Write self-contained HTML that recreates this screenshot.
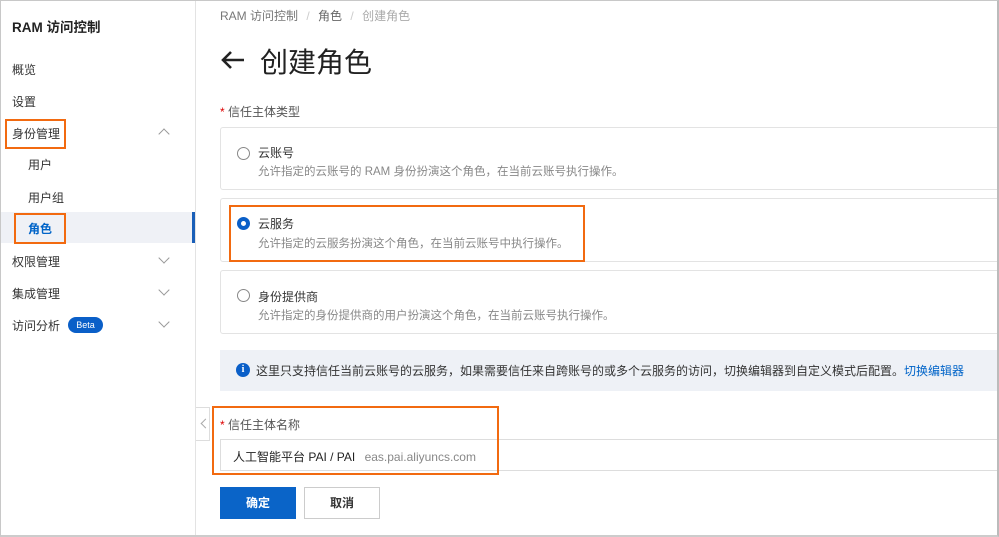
<!DOCTYPE html>
<html><head><meta charset="utf-8"><style>
*{box-sizing:border-box;margin:0;padding:0}
body{width:999px;height:537px;overflow:hidden;background:#fff;font-family:"Liberation Sans","Noto Sans CJK SC",sans-serif;color:#333;position:relative;font-size:12px}
.abs{position:absolute}
.frame{position:absolute;left:0;top:0;width:999px;height:537px;border:1px solid #c8c8c8;border-right:2px solid #bbb;border-bottom:2px solid #ccc;pointer-events:none}
.side{left:1px;top:1px;width:195px;height:535px;border-right:1px solid #e3e3e3;background:#fff}
.nav{position:absolute;left:12px;font-size:12px;color:#333}
.chev{position:absolute;left:160px;width:8px;height:8px;border-right:1.3px solid #999;border-bottom:1.3px solid #999}
.card{position:absolute;left:220px;width:790px;border:1px solid #e3e3e3;border-radius:3px}
.radio{position:absolute;left:16px;width:13px;height:13px;border:1px solid #888;border-radius:50%}
.ct{position:absolute;left:37px;font-size:12px;color:#333}
.cd{position:absolute;left:37px;font-size:11.5px;color:#888}
.ob{position:absolute;border:2px solid #f26a10}
</style></head><body>
<div class="abs side"></div>
<div class="abs" style="left:12px;top:16px;font-size:13.5px;font-weight:bold;color:#222">RAM 访问控制</div>
<div class="nav" style="top:61px">概览</div>
<div class="nav" style="top:93px">设置</div>
<div class="nav" style="top:125px">身份管理</div>
<div class="chev" style="top:130px;transform:rotate(-135deg)"></div>
<div class="nav" style="top:156px;left:28px">用户</div>
<div class="nav" style="top:189px;left:28px">用户组</div>
<div class="abs" style="left:1px;top:212px;width:194px;height:31px;background:#eff1f6"></div>
<div class="abs" style="left:192px;top:212px;width:3px;height:31px;background:#1a5fb8"></div>
<div class="nav" style="top:220px;left:28px;color:#0064c8;font-weight:bold">角色</div>
<div class="nav" style="top:253px">权限管理</div>
<div class="chev" style="top:254px;transform:rotate(45deg)"></div>
<div class="nav" style="top:285px">集成管理</div>
<div class="chev" style="top:286px;transform:rotate(45deg)"></div>
<div class="nav" style="top:317px">访问分析</div>
<div class="abs" style="left:68px;top:317px;width:35px;height:16px;border-radius:8px;background:#0a5fc8;color:#fff;font-size:9px;text-align:center;line-height:16px">Beta</div>
<div class="chev" style="top:318px;transform:rotate(45deg)"></div>
<div class="ob" style="left:5px;top:119px;width:61px;height:30px"></div>
<div class="ob" style="left:14px;top:213px;width:52px;height:31px"></div>

<div class="abs" style="left:220px;top:7px;font-size:12px;color:#777">RAM 访问控制 <span style="color:#ccc;margin:0 5px">/</span> <span style="color:#666">角色</span> <span style="color:#ccc;margin:0 5px">/</span> <span style="color:#aaa">创建角色</span></div>
<svg class="abs" style="left:220px;top:50px" width="26" height="20" viewBox="0 0 26 20"><path d="M24 10H3M11 2L3 10l8 8" stroke="#222" stroke-width="2.6" fill="none"/></svg>
<div class="abs" style="left:260px;top:41px;font-size:28px;color:#222">创建角色</div>
<div class="abs" style="left:220px;top:103px;font-size:12px;color:#555"><span style="color:#d00">*</span> 信任主体类型</div>

<div class="card" style="top:127px;height:63px"><div class="radio" style="top:19px"></div><div class="ct" style="top:16px">云账号</div><div class="cd" style="top:35px">允许指定的云账号的 RAM 身份扮演这个角色，在当前云账号执行操作。</div></div>
<div class="card" style="top:198px;height:64px"><div class="radio" style="top:18px;border:4px solid #0a5fc8"></div><div class="ct" style="top:16px">云服务</div><div class="cd" style="top:36px">允许指定的云服务扮演这个角色，在当前云账号中执行操作。</div></div>
<div class="card" style="top:270px;height:64px"><div class="radio" style="top:18px"></div><div class="ct" style="top:17px">身份提供商</div><div class="cd" style="top:36px">允许指定的身份提供商的用户扮演这个角色，在当前云账号执行操作。</div></div>
<div class="ob" style="left:229px;top:205px;width:356px;height:57px"></div>

<div class="abs" style="left:220px;top:350px;width:777px;height:41px;background:#eef1f6"></div>
<div class="abs" style="left:236px;top:363px;width:14px;height:14px;border-radius:50%;background:#0a5fc8;color:#fff;font-size:10px;font-weight:bold;text-align:center;line-height:14px;font-family:'Liberation Serif',serif">i</div>
<div class="abs" style="left:256px;top:362px;font-size:12px;color:#333;white-space:nowrap">这里只支持信任当前云账号的云服务，如果需要信任来自跨账号的或多个云服务的访问，切换编辑器到自定义模式后配置。<span style="color:#0064c8">切换编辑器</span></div>

<div class="abs" style="left:196px;top:407px;width:14px;height:34px;border:1px solid #ddd;border-left:none;background:#fff"></div>
<div class="abs" style="left:202px;top:420px;width:7px;height:7px;border-left:1.3px solid #aaa;border-bottom:1.3px solid #aaa;transform:rotate(45deg)"></div>
<div class="abs" style="left:220px;top:416px;font-size:12px;color:#555"><span style="color:#d00">*</span> 信任主体名称</div>
<div class="abs" style="left:220px;top:439px;width:779px;height:32px;border:1px solid #ddd"></div>
<div class="abs" style="left:233px;top:448px;font-size:12px;color:#222">人工智能平台 PAI / PAI <span style="color:#888;margin-left:6px">eas.pai.aliyuncs.com</span></div>
<div class="ob" style="left:212px;top:406px;width:287px;height:69px"></div>

<div class="abs" style="left:220px;top:487px;width:76px;height:32px;background:#0a64c8;color:#fff;font-weight:bold;text-align:center;line-height:32px">确定</div>
<div class="abs" style="left:304px;top:487px;width:76px;height:32px;border:1px solid #ccc;color:#333;font-weight:bold;text-align:center;line-height:30px">取消</div>
<div class="frame"></div>
</body></html>
